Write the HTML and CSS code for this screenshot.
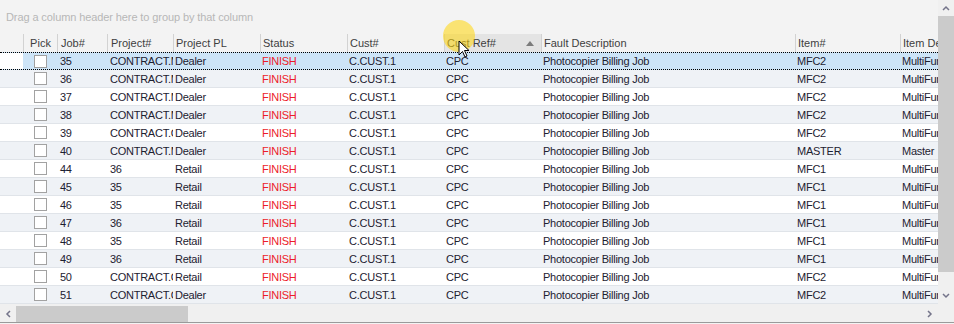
FILE: index.html
```html
<!DOCTYPE html>
<html lang="en">
<head>
    <meta charset="UTF-8">
    <title>Jobs</title>
    <link rel="stylesheet" href="styles.css">
</head>
<body>

    <div class="grid-view">
        <div class="grid-main">
            <div class="group-panel">Drag a column header here to group by that column</div>

            <div class="header-row">
                <div class="cell c-ind"></div>
                <div class="cell c-pick hd center">Pick</div>
                <div class="cell c-job hd">Job#</div>
                <div class="cell c-proj hd">Project#</div>
                <div class="cell c-pl hd">Project PL</div>
                <div class="cell c-status hd">Status</div>
                <div class="cell c-cust hd">Cust#</div>
                <div class="cell c-ref hd sorted">Cust Ref#<span class="sort-arrow"></span></div>
                <div class="cell c-fault hd">Fault Description</div>
                <div class="cell c-item hd">Item#</div>
                <div class="cell c-desc hd">Item Description</div>
            </div>

            <div id="rows"></div>
        </div>

        <div class="vscroll">
            <div class="sb-btn">
                <svg width="8" height="6" viewBox="0 0 8 6"><path d="M1 5 L4 2 L7 5" fill="none" stroke="#74748a" stroke-width="1.5"/></svg>
            </div>
            <div class="vthumb"></div>
            <div class="vtrack"></div>
            <div class="sb-btn">
                <svg width="8" height="6" viewBox="0 0 8 6"><path d="M1 1 L4 4 L7 1" fill="none" stroke="#74748a" stroke-width="1.5"/></svg>
            </div>
        </div>

        <div class="hscroll">
            <div class="sb-btn">
                <svg width="6" height="8" viewBox="0 0 6 8"><path d="M5 1 L2 4 L5 7" fill="none" stroke="#74748a" stroke-width="1.5"/></svg>
            </div>
            <div class="hthumb"></div>
            <div class="htrack"></div>
            <div class="sb-btn">
                <svg width="6" height="8" viewBox="0 0 6 8"><path d="M1 1 L4 4 L1 7" fill="none" stroke="#74748a" stroke-width="1.5"/></svg>
            </div>
        </div>
        <div class="corner"></div>

        <!-- podswietlenie kursora -->
        <div class="cursor-glow"></div>
        <svg class="cursor" width="14" height="20" viewBox="0 0 14 20">
            <path d="M1 1 L1 15 L4.5 11.5 L7 17 L9 16 L6.5 10.5 L11 10.5 Z" fill="#fff" stroke="#000" stroke-width="1"/>
        </svg>
    </div>

    <script>
        const jobs = [
            ['35', 'CONTRACT.MAINT', 'Dealer', 'MFC2', 'MultiFunction Copier'],
            ['36', 'CONTRACT.MAINT', 'Dealer', 'MFC2', 'MultiFunction Copier'],
            ['37', 'CONTRACT.MAINT', 'Dealer', 'MFC2', 'MultiFunction Copier'],
            ['38', 'CONTRACT.MAINT', 'Dealer', 'MFC2', 'MultiFunction Copier'],
            ['39', 'CONTRACT.COPY', 'Dealer', 'MFC2', 'MultiFunction Copier'],
            ['40', 'CONTRACT.MAINT', 'Dealer', 'MASTER', 'Master'],
            ['44', '36', 'Retail', 'MFC1', 'MultiFunction Copier'],
            ['45', '35', 'Retail', 'MFC1', 'MultiFunction Copier'],
            ['46', '35', 'Retail', 'MFC1', 'MultiFunction Copier'],
            ['47', '36', 'Retail', 'MFC1', 'MultiFunction Copier'],
            ['48', '35', 'Retail', 'MFC1', 'MultiFunction Copier'],
            ['49', '36', 'Retail', 'MFC1', 'MultiFunction Copier'],
            ['50', 'CONTRACT.COPY', 'Retail', 'MFC2', 'MultiFunction Copier'],
            ['51', 'CONTRACT.COPY', 'Dealer', 'MFC2', 'MultiFunction Copier']
        ];

        const rows = document.getElementById('rows');
        jobs.forEach((j, i) => {
            let cls = 'row';
            if (i === 0) cls += ' focused';
            else if (i % 2 === 1) cls += ' alt';

            rows.innerHTML += `
                <div class="${cls}">
                    <div class="cell c-ind"></div>
                    <div class="cell c-pick"><span class="check"></span></div>
                    <div class="cell c-job">${j[0]}</div>
                    <div class="cell c-proj">${j[1]}</div>
                    <div class="cell c-pl">${j[2]}</div>
                    <div class="cell c-status finish">FINISH</div>
                    <div class="cell c-cust">C.CUST.1</div>
                    <div class="cell c-ref">CPC</div>
                    <div class="cell c-fault">Photocopier Billing Job</div>
                    <div class="cell c-item">${j[3]}</div>
                    <div class="cell c-desc">${j[4]}</div>
                </div>`;
        });
    </script>

</body>
</html>
```

FILE: styles.css
```css
* {
    margin: 0;
    padding: 0;
    box-sizing: border-box;
}

body {
    font-family: "Liberation Sans", Arial, sans-serif;
    font-size: 11px;
    background-color: #f3f3f3;
    color: #1d2130;
}

.grid-view {
    position: relative;
    display: grid;
    grid-template-columns: 938px 16px;
    grid-template-rows: 304px 18px;
    height: 323px;
    border-bottom: 1px solid #9a9a9a;
    overflow: hidden;
}

.grid-main {
    overflow: hidden;
    background-color: #f3f3f3;
}

.group-panel {
    height: 34px;
    padding: 11px 0 0 6px;
    color: #b7b7b7;
    letter-spacing: -0.1px;
}

.header-row, .row {
    display: flex;
    height: 18px;
    white-space: nowrap;
}

.cell {
    flex: none;
    overflow: hidden;
    padding-left: 3px;
    line-height: 18px;
}

.c-ind    { width: 23px; padding: 0; }
.c-pick   { width: 34px; }
.c-job    { width: 50px; }
.c-proj   { width: 66px; }
.c-pl     { width: 87px; padding-left: 2px; }
.c-status { width: 87px; padding-left: 2px; }
.c-cust   { width: 97px; padding-left: 2px; }
.c-ref    { width: 97px; padding-left: 2px; }
.c-fault  { width: 254px; padding-left: 2px; }
.c-item   { width: 105px; padding-left: 2px; }
.c-desc   { width: 140px; padding-left: 2px; }

/* Naglowki kolumn */
.hd {
    border-left: 1px solid #d2d2d2;
    color: #3e3e3e;
}

.center {
    text-align: center;
    padding-left: 0;
}

.sorted {
    position: relative;
    background-color: #e4e4e4;
}

.sort-arrow {
    position: absolute;
    right: 7px;
    top: 7px;
    width: 0;
    height: 0;
    border-left: 4px solid transparent;
    border-right: 4px solid transparent;
    border-bottom: 5px solid #7c7c7c;
}

/* Wiersze */
.row {
    background-color: #fff;
    border-bottom: 1px solid #e0e4e9;
    letter-spacing: -0.25px;
}

.row.alt {
    background-color: #eff2f6;
}

.row.focused {
    background-color: #cde4f7;
    border-top: 1px dotted #000;
    border-bottom: 1px dotted #000;
}

.row.focused .cell {
    line-height: 16px;
}

.row.focused .c-ind {
    background-color: #fff;
}

.row .c-pick {
    display: flex;
    align-items: center;
    padding-left: 11px;
}

.check {
    display: block;
    width: 13px;
    height: 13px;
    border: 1px solid #a2a2a2;
    background-color: #fff;
}

.finish {
    color: #ec1c2a;
}

/* Paski przewijania */
.vscroll {
    display: flex;
    flex-direction: column;
    background-color: #f0f0f0;
}

.sb-btn {
    flex: none;
    width: 16px;
    height: 16px;
    display: flex;
    align-items: center;
    justify-content: center;
}

.vthumb {
    height: 256px;
    background-color: #cbcbcb;
}

.vtrack {
    flex: 1;
}

.hscroll {
    display: flex;
    align-items: flex-end;
    background-color: #f0f0f0;
    padding-top: 2px;
}

.hthumb {
    width: 172px;
    height: 16px;
    background-color: #cbcbcb;
}

.htrack {
    flex: 1;
}

.corner {
    background-color: #f0f0f0;
}

.cursor-glow {
    position: absolute;
    left: 443px;
    top: 20px;
    width: 32px;
    height: 32px;
    border-radius: 50%;
    background-color: rgba(255, 214, 10, 0.55);
}

.cursor {
    position: absolute;
    left: 458px;
    top: 40px;
}
```
